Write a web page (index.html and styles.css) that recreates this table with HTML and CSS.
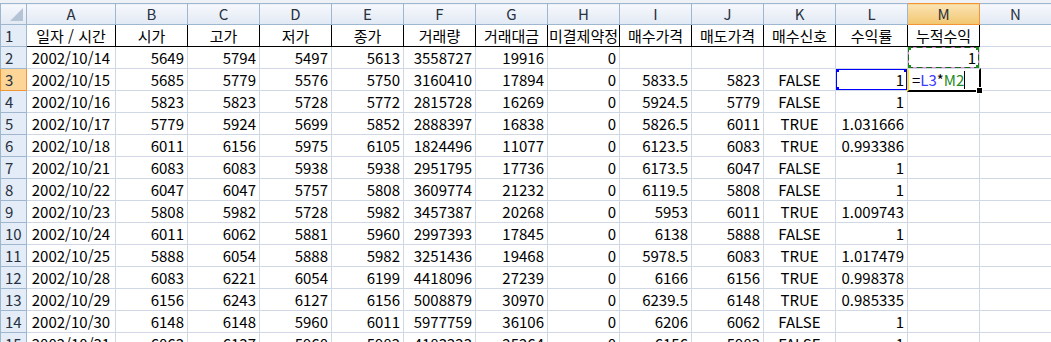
FILE: index.html
```html
<!DOCTYPE html>
<html lang="ko">
<head>
    <meta charset="UTF-8">
    <title>Sheet1</title>
    <link rel="stylesheet" href="styles.css">
</head>
<body>
    <div class="sheet">
        <table class="grid">
            <colgroup>
                <col class="col-head">
                <col class="col-a">
                <col span="13" class="col-std">
            </colgroup>
            <thead>
                <tr class="letters">
                    <th class="corner"><span class="corner-mark"></span></th>
                    <th>A</th><th>B</th><th>C</th><th>D</th><th>E</th><th>F</th><th>G</th>
                    <th>H</th><th>I</th><th>J</th><th>K</th><th>L</th><th class="active">M</th><th>N</th>
                </tr>
            </thead>
            <tbody>
                <tr class="titles">
                    <th class="rownum">1</th>
                    <td>일자 / 시간</td><td>시가</td><td>고가</td><td>저가</td><td>종가</td><td>거래량</td><td>거래대금</td>
                    <td class="clip"><span>미결제약정</span></td><td>매수가격</td><td>매도가격</td><td>매수신호</td><td>수익률</td><td>누적수익</td><td class="plain"></td>
                </tr>
                <tr>
                    <th class="rownum">2</th>
                    <td class="date">2002/10/14</td><td>5649</td><td>5794</td><td>5497</td><td>5613</td><td>3558727</td><td>19916</td>
                    <td>0</td><td></td><td></td><td></td><td></td>
                    <td class="ref-cell">1<span class="ants-pink"></span><span class="ants-green"></span><i class="dot tl"></i><i class="dot tr"></i><i class="dot bl"></i><i class="dot br"></i></td><td></td>
                </tr>
                <tr>
                    <th class="rownum active">3</th>
                    <td class="date">2002/10/15</td><td>5685</td><td>5779</td><td>5576</td><td>5750</td><td>3160410</td><td>17894</td>
                    <td>0</td><td>5833.5</td><td>5823</td><td class="bool">FALSE</td>
                    <td class="range-cell">1<span class="range-box"></span><i class="knob tl"></i><i class="knob tr"></i><i class="knob bl"></i></td>
                    <td class="edit-cell"><span class="formula">=<b class="f-blue">L3</b>*<b class="f-green">M2</b></span><span class="caret"></span><span class="edit-box"></span><i class="handle"></i></td><td></td>
                </tr>
                <tr>
                    <th class="rownum">4</th>
                    <td class="date">2002/10/16</td><td>5823</td><td>5823</td><td>5728</td><td>5772</td><td>2815728</td><td>16269</td>
                    <td>0</td><td>5924.5</td><td>5779</td><td class="bool">FALSE</td><td>1</td><td></td><td></td>
                </tr>
                <tr>
                    <th class="rownum">5</th>
                    <td class="date">2002/10/17</td><td>5779</td><td>5924</td><td>5699</td><td>5852</td><td>2888397</td><td>16838</td>
                    <td>0</td><td>5826.5</td><td>6011</td><td class="bool">TRUE</td><td>1.031666</td><td></td><td></td>
                </tr>
                <tr>
                    <th class="rownum">6</th>
                    <td class="date">2002/10/18</td><td>6011</td><td>6156</td><td>5975</td><td>6105</td><td>1824496</td><td>11077</td>
                    <td>0</td><td>6123.5</td><td>6083</td><td class="bool">TRUE</td><td>0.993386</td><td></td><td></td>
                </tr>
                <tr>
                    <th class="rownum">7</th>
                    <td class="date">2002/10/21</td><td>6083</td><td>6083</td><td>5938</td><td>5938</td><td>2951795</td><td>17736</td>
                    <td>0</td><td>6173.5</td><td>6047</td><td class="bool">FALSE</td><td>1</td><td></td><td></td>
                </tr>
                <tr>
                    <th class="rownum">8</th>
                    <td class="date">2002/10/22</td><td>6047</td><td>6047</td><td>5757</td><td>5808</td><td>3609774</td><td>21232</td>
                    <td>0</td><td>6119.5</td><td>5808</td><td class="bool">FALSE</td><td>1</td><td></td><td></td>
                </tr>
                <tr>
                    <th class="rownum">9</th>
                    <td class="date">2002/10/23</td><td>5808</td><td>5982</td><td>5728</td><td>5982</td><td>3457387</td><td>20268</td>
                    <td>0</td><td>5953</td><td>6011</td><td class="bool">TRUE</td><td>1.009743</td><td></td><td></td>
                </tr>
                <tr>
                    <th class="rownum">10</th>
                    <td class="date">2002/10/24</td><td>6011</td><td>6062</td><td>5881</td><td>5960</td><td>2997393</td><td>17845</td>
                    <td>0</td><td>6138</td><td>5888</td><td class="bool">FALSE</td><td>1</td><td></td><td></td>
                </tr>
                <tr>
                    <th class="rownum">11</th>
                    <td class="date">2002/10/25</td><td>5888</td><td>6054</td><td>5888</td><td>5982</td><td>3251436</td><td>19468</td>
                    <td>0</td><td>5978.5</td><td>6083</td><td class="bool">TRUE</td><td>1.017479</td><td></td><td></td>
                </tr>
                <tr>
                    <th class="rownum">12</th>
                    <td class="date">2002/10/28</td><td>6083</td><td>6221</td><td>6054</td><td>6199</td><td>4418096</td><td>27239</td>
                    <td>0</td><td>6166</td><td>6156</td><td class="bool">TRUE</td><td>0.998378</td><td></td><td></td>
                </tr>
                <tr>
                    <th class="rownum">13</th>
                    <td class="date">2002/10/29</td><td>6156</td><td>6243</td><td>6127</td><td>6156</td><td>5008879</td><td>30970</td>
                    <td>0</td><td>6239.5</td><td>6148</td><td class="bool">TRUE</td><td>0.985335</td><td></td><td></td>
                </tr>
                <tr>
                    <th class="rownum">14</th>
                    <td class="date">2002/10/30</td><td>6148</td><td>6148</td><td>5960</td><td>6011</td><td>5977759</td><td>36106</td>
                    <td>0</td><td>6206</td><td>6062</td><td class="bool">FALSE</td><td>1</td><td></td><td></td>
                </tr>
                <tr>
                    <th class="rownum">15</th>
                    <td class="date">2002/10/31</td><td>6063</td><td>6137</td><td>5960</td><td>5982</td><td>4183223</td><td>25264</td>
                    <td>0</td><td>6156</td><td>5982</td><td class="bool">FALSE</td><td>1</td><td></td><td></td>
                </tr>
            </tbody>
        </table>
    </div>
</body>
</html>
```

FILE: styles.css
```css
body {
    margin: 0;
    background-color: #eef1f6;
    font-family: "Noto Sans CJK KR", "Noto Sans", sans-serif;
    font-size: 15px;
    color: #000;
    overflow: hidden;
}

.sheet {
    padding-top: 3px;
}

.grid {
    table-layout: fixed;
    border-collapse: collapse;
    width: 1051px;
    background-color: #fff;
}

.col-head {
    width: 26px;
}

.col-a {
    width: 89px;
}

.col-std {
    width: 72px;
}

.grid td,
.grid th {
    border: 1px solid #d0d7e5;
    padding: 0 3px;
    height: 21px;
    line-height: 20px;
    white-space: nowrap;
    overflow: hidden;
    text-align: right;
    font-weight: normal;
}

/* column letters */
.letters th {
    height: 20px;
    background: linear-gradient(#f6f8fc, #e2e9f4);
    border-color: #9eb6ce;
    color: #27313f;
    text-align: center;
}

.letters th.active {
    background: linear-gradient(#fae3b4, #f3c66f);
    border-color: #f29536;
}

.corner {
    position: relative;
}

.corner-mark {
    position: absolute;
    right: 3px;
    bottom: 3px;
    width: 0;
    height: 0;
    border-left: 13px solid transparent;
    border-bottom: 13px solid #b5c3d6;
}

/* row numbers */
.grid th.rownum {
    background-color: #e4ecf7;
    border-color: #9eb6ce;
    color: #27313f;
    text-align: left;
    padding-left: 4px;
}

.grid th.rownum.active {
    background-color: #fcd597;
    border-color: #f29536;
}

/* title row */
.titles td {
    text-align: center;
    border-right-color: #000;
    border-bottom-color: #000;
}

.titles td.plain {
    border-right-color: #d0d7e5;
    border-bottom-color: #d0d7e5;
}

.titles td.clip {
    padding: 0;
}

.clip span {
    display: flex;
    justify-content: center;
}

.grid td.date,
.grid td.bool {
    text-align: center;
}

/* M2: copied reference (marching ants) */
.ref-cell,
.range-cell,
.edit-cell {
    position: relative;
}

.ants-pink,
.ants-green {
    position: absolute;
    left: -1px;
    top: -1px;
    right: -1px;
    bottom: -1px;
}

.ants-pink {
    border: 2px solid #ee8ae4;
}

.ants-green {
    border: 2px dashed #1c6a1c;
}

.dot {
    position: absolute;
    width: 5px;
    height: 5px;
    background-color: #1f8a1f;
}

.knob {
    position: absolute;
    width: 5px;
    height: 5px;
    background-color: #0000ff;
}

.tl { left: -2px; top: -2px; }
.tr { right: -2px; top: -2px; }
.bl { left: -2px; bottom: -2px; }
.br { right: -2px; bottom: -2px; }

/* L3: range used in the formula */
.range-box {
    position: absolute;
    left: -1px;
    top: -1px;
    right: -1px;
    bottom: -1px;
    border: 2px solid #0000ff;
}

/* M3: cell being edited */
.grid td.edit-cell {
    text-align: left;
    padding-left: 4px;
    overflow: visible;
}

.formula {
    color: #000;
}

.formula b {
    font-weight: normal;
}

.f-blue {
    color: #3b3bff;
}

.f-green {
    color: #1f8a1f;
}

.caret {
    position: absolute;
    left: 56px;
    top: 2px;
    width: 1px;
    height: 18px;
    background-color: #000;
}

.edit-box {
    position: absolute;
    left: -1px;
    top: -1px;
    right: -2px;
    bottom: -2px;
    border: 2px solid #000;
    border-left-color: #ffe500;
    border-top-color: transparent;
}

.handle {
    position: absolute;
    right: -4px;
    bottom: -4px;
    width: 5px;
    height: 5px;
    background-color: #000;
    border: 1px solid #fff;
}
```
